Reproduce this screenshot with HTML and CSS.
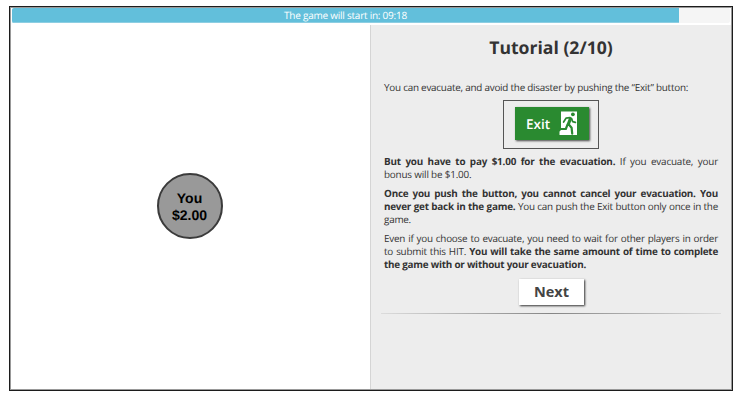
FILE: index.html
```html
<!DOCTYPE html>
<html lang="en">
<head>
<meta charset="utf-8">
<title>Tutorial</title>
<link rel="stylesheet" href="styles.css">
</head>
<body>
<div class="frame">
  <div class="progress"><div class="progress-fill">The game will start in: 09:18</div></div>
  <main class="columns">
    <section class="board">
      <div class="player"><span>You</span><span>$2.00</span></div>
    </section>
    <section class="tutorial">
      <h1>Tutorial (2/10)</h1>
      <p>You can evacuate, and avoid the disaster by pushing the “Exit” button:</p>
      <div class="exit-box">
        <div class="exit-button">
          <span>Exit</span>
          <svg class="exit-icon" viewBox="0 0 19 25" width="19" height="25">
            <path fill="#fff" d="M2 .5H18V24H.5V20.5L2 19Z"/>
            <g fill="none" stroke="#2a8a30" stroke-linecap="round" stroke-linejoin="round">
              <path stroke-width="3.2" d="M11.4 7.8L9.4 13"/>
              <path stroke-width="1.7" d="M11 6.6L7 7.2L4.6 11M12.6 7.6L13.6 10.6L16.4 11.4"/>
              <path stroke-width="2.2" d="M9.4 13L12.6 16.7L13.2 22.6M8.6 13.4L6.8 18L.8 18"/>
            </g>
            <circle cx="13.9" cy="3.3" r="1.9" fill="#2a8a30"/>
          </svg>
        </div>
      </div>
      <p class="cost"><b>But you have to pay $1.00 for the evacuation.</b> If you evacuate, your bonus will be $1.00.</p>
      <p><b>Once you push the button, you cannot cancel your evacuation. You never get back in the game.</b> You can push the Exit button only once in the game.</p>
      <p>Even if you choose to evacuate, you need to wait for other players in order to submit this HIT. <b>You will take the same amount of time to complete the game with or without your evacuation.</b></p>
      <button class="next" type="button">Next</button>
      <div class="rule"></div>
    </section>
  </main>
</div>
</body>
</html>
```
FILE: styles.css
```css
* { box-sizing: border-box; }
body {
  margin: 0;
  padding: 6px 11px 10px 9px;
  height: 401px;
  background: #fff;
  color: #333;
  font-family: "Open Sans", sans-serif;
  text-rendering: geometricPrecision;
  overflow: hidden;
}
.frame {
  width: 724px;
  height: 385px;
  border: 1px solid #1c1c1c;
  box-shadow: inset 0 0 0 1px #999;
  padding: 1px;
  display: flex;
  flex-direction: column;
}
.progress {
  height: 15px;
  margin: 0 1px 2px 1px;
  background: #f5f5f5;
  border-radius: 2px;
  overflow: hidden;
}
.progress-fill {
  width: 667px;
  height: 15px;
  background: #62bfdb;
  border-bottom: 1px solid #8dcee2;
  color: #fff;
  font-size: 10px;
  font-weight: 500;
  letter-spacing: -0.24px;
  line-height: 15px;
  text-align: center;
}
.columns { display: flex; flex: 1; }
.board { width: 359px; padding: 148px 0 0 146px; }
.player {
  width: 66px;
  height: 66px;
  border: 2px solid #3b3b3b;
  border-radius: 50%;
  background: #999;
  color: #000;
  display: flex;
  flex-direction: column;
  align-items: center;
  padding: 15px 1px 0 0;
  font: bold 14px/16.5px "Liberation Sans", sans-serif;
}
.tutorial {
  flex: 1;
  background: #ededed;
  border-left: 1px solid #d5d5d5;
  padding: 11px 13px 0 13px;
}
h1 {
  margin: 0 0 20px;
  font-size: 17.6px;
  line-height: 25px;
  text-align: center;
}
p {
  margin: 0 0 6px;
  font-size: 9.9px;
  letter-spacing: -0.23px;
  line-height: 13px;
  text-align: justify;
}
.cost { letter-spacing: -0.18px; }
.exit-box {
  width: 96px;
  height: 49px;
  margin: 0 auto 6px;
  border: 1px solid #555;
  padding: 6px 0 0 11px;
}
.exit-button {
  width: 74px;
  height: 33px;
  background: #2a8a30;
  box-shadow: 1px 1px 2px #444;
  color: #fff;
  display: flex;
  align-items: center;
  padding-left: 11px;
  font-size: 13.5px;
  font-weight: 600;
}
.exit-icon { margin-left: 9px; }
.next {
  display: block;
  width: 65px;
  height: 26px;
  margin: 8px auto 8px 135px;
  padding: 0;
  border: 0;
  background: #fff;
  box-shadow: 1px 1px 2px #333;
  color: #444;
  font: bold 14.5px/26px "Open Sans", sans-serif;
}
.rule {
  height: 1px;
  margin: 0 -3px;
  background: linear-gradient(to right, #dcdcdc, #858585, #dcdcdc);
}
```
